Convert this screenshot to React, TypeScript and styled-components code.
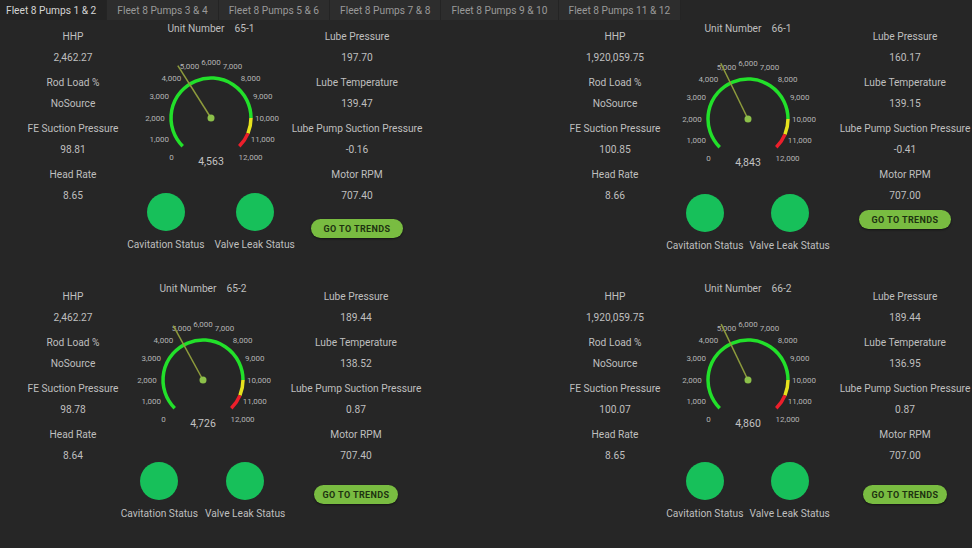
import React from "react";
import styled, { createGlobalStyle } from "styled-components";

const GlobalStyle = createGlobalStyle`
  html, body {
    margin: 0;
    padding: 0;
    background: #262626;
    overflow: hidden;
  }
  body {
    font-family: Roboto, "Liberation Sans", Arial, sans-serif;
    color: #bdbdbd;
  }
`;

const Page = styled.div`
  width: 972px;
  height: 548px;
  background: #262626;
`;

const TabBar = styled.div`
  display: flex;
  height: 20px;
  background: #262626;
`;

const Tab = styled.div<{ $active?: boolean }>`
  display: flex;
  align-items: center;
  padding: 0 10px;
  font-size: 10.2px;
  color: ${(p) => (p.$active ? "#d4d4d4" : "#999999")};
  background: ${(p) => (p.$active ? "#232323" : "#2d2d2d")};
  border-right: 1px solid #242424;
  white-space: nowrap;

  &:first-child {
    padding-left: 6px;
  }
`;

const Grid = styled.div`
  display: grid;
  grid-template-columns: 486px 486px;
  grid-template-rows: 260px 260px;
`;

const Panel = styled.div<{ $cols: string; $pad: number }>`
  display: grid;
  grid-template-columns: ${(p) => p.$cols};
  padding-left: ${(p) => p.$pad}px;
  align-items: start;
`;

const Column = styled.div`
  display: flex;
  flex-direction: column;
  align-items: center;
  padding-top: 6px;
`;

const Center = styled.div`
  display: flex;
  flex-direction: column;
  align-items: center;
`;

const Field = styled.div`
  display: flex;
  flex-direction: column;
  align-items: center;
  margin-bottom: 4px;
  white-space: nowrap;
`;

const Label = styled.div`
  font-size: 10.2px;
  line-height: 21px;
  color: #bfbfbf;
`;

const Value = styled.div`
  font-size: 10.2px;
  line-height: 21px;
  color: #bfbfbf;
`;

const UnitRow = styled.div`
  display: flex;
  gap: 10px;
  font-size: 10.2px;
  line-height: 18px;
  color: #bfbfbf;
  white-space: nowrap;
`;

const GaugeSvg = styled.svg<{ $top: number }>`
  display: block;
  margin-top: ${(p) => p.$top}px;
`;

const StatusRow = styled.div<{ $top: number; $gap: number }>`
  display: flex;
  gap: ${(p) => p.$gap}px;
  margin-top: ${(p) => p.$top}px;
`;

const StatusItem = styled.div`
  display: flex;
  flex-direction: column;
  align-items: center;
`;

const Lamp = styled.div`
  width: 38px;
  height: 38px;
  border-radius: 50%;
  background: #17c05a;
`;

const StatusLabel = styled.div`
  margin-top: 7px;
  font-size: 10.2px;
  line-height: 14px;
  color: #bfbfbf;
  white-space: nowrap;
`;

const TrendsButton = styled.button<{ $top: number; $width: number }>`
  margin-top: ${(p) => p.$top}px;
  width: ${(p) => p.$width}px;
  height: 19px;
  border: none;
  border-radius: 10px;
  background: #79bc41;
  color: #1d3210;
  font-family: Roboto, "Liberation Sans", Arial, sans-serif;
  font-weight: 700;
  font-size: 9px;
  letter-spacing: 0.4px;
  padding: 0;
  box-shadow: 0 1px 2px rgba(0, 0, 0, 0.5);
  cursor: pointer;
`;

const MAX = 12000;
const R = 40;
const CX = 75;
const CY = 66;

const angle = (v: number) => ((-135 + (v / MAX) * 270) * Math.PI) / 180;
const pt = (v: number, r: number) => {
  const a = angle(v);
  return [CX + r * Math.sin(a), CY - r * Math.cos(a)];
};

const arc = (from: number, to: number) => {
  const [x1, y1] = pt(from, R);
  const [x2, y2] = pt(to, R);
  const large = ((to - from) / MAX) * 270 > 180 ? 1 : 0;
  return `M ${x1} ${y1} A ${R} ${R} 0 ${large} 1 ${x2} ${y2}`;
};

const Gauge = ({ value, top }: { value: number; top: number }) => {
  const [nx, ny] = pt(value, 62);
  const ticks = Array.from({ length: 13 }, (_, i) => i * 1000);
  return (
    <GaugeSvg width="150" height="122" viewBox="0 0 150 122" $top={top}>
      <path d={arc(0, 10000)} stroke="#22e02a" strokeWidth="3.5" fill="none" />
      <path d={arc(10000, 11000)} stroke="#e6e21e" strokeWidth="3.5" fill="none" />
      <path d={arc(11000, 12000)} stroke="#ec1f2b" strokeWidth="3.5" fill="none" />
      {ticks.map((t) => {
        const [x, y] = pt(t, 56);
        return (
          <text
            key={t}
            x={x}
            y={y}
            fontSize="8"
            fill="#b4b4b4"
            textAnchor="middle"
            dominantBaseline="central"
            fontFamily="Roboto, 'Liberation Sans', sans-serif"
          >
            {t.toLocaleString("en-US")}
          </text>
        );
      })}
      <line x1={CX} y1={CY} x2={nx} y2={ny} stroke="#8d9b3c" strokeWidth="1.5" />
      <circle cx={CX} cy={CY} r="3.5" fill="#8cc04a" />
      <text
        x={CX}
        y={CY + 43}
        fontSize="10.5"
        fill="#c2c2c2"
        textAnchor="middle"
        dominantBaseline="central"
        fontFamily="Roboto, 'Liberation Sans', sans-serif"
      >
        {value.toLocaleString("en-US")}
      </text>
    </GaugeSvg>
  );
};

type Pump = {
  unit: string;
  hhp: string;
  fe: string;
  head: string;
  rpmGauge: number;
  lp: string;
  lt: string;
  lps: string;
  rpm: string;
  cols: string;
  pad: number;
  gaugeTop: number;
  statusTop: number;
  statusGap: number;
  btnTop: number;
  btnWidth: number;
};

const pumps: Pump[] = [
  {
    unit: "65-1", hhp: "2,462.27", fe: "98.81", head: "8.65", rpmGauge: 4563,
    lp: "197.70", lt: "139.47", lps: "-0.16", rpm: "707.40",
    cols: "146px 130px 162px", pad: 0, gaugeTop: 14, statusTop: 19, statusGap: 10,
    btnTop: 9, btnWidth: 92,
  },
  {
    unit: "66-1", hhp: "1,920,059.75", fe: "100.85", head: "8.66", rpmGauge: 4843,
    lp: "160.17", lt: "139.15", lps: "-0.41", rpm: "707.00",
    cols: "120px 146px 168px", pad: 69, gaugeTop: 15, statusTop: 19, statusGap: 6,
    btnTop: 0, btnWidth: 92,
  },
  {
    unit: "65-2", hhp: "2,462.27", fe: "98.78", head: "8.64", rpmGauge: 4726,
    lp: "189.44", lt: "138.52", lps: "0.87", rpm: "707.40",
    cols: "146px 114px 192px", pad: 0, gaugeTop: 16, statusTop: 26, statusGap: 7,
    btnTop: 15, btnWidth: 84,
  },
  {
    unit: "66-2", hhp: "1,920,059.75", fe: "100.07", head: "8.65", rpmGauge: 4860,
    lp: "189.44", lt: "136.95", lps: "0.87", rpm: "707.00",
    cols: "120px 146px 168px", pad: 69, gaugeTop: 16, statusTop: 26, statusGap: 6,
    btnTop: 15, btnWidth: 84,
  },
];

const tabs = [
  "Fleet 8 Pumps 1 & 2",
  "Fleet 8 Pumps 3 & 4",
  "Fleet 8 Pumps 5 & 6",
  "Fleet 8 Pumps 7 & 8",
  "Fleet 8 Pumps 9 & 10",
  "Fleet 8 Pumps 11 & 12",
];

const Reading = ({ label, value }: { label: string; value: string }) => (
  <Field>
    <Label>{label}</Label>
    <Value>{value}</Value>
  </Field>
);

const PumpPanel = ({ p }: { p: Pump }) => (
  <Panel $cols={p.cols} $pad={p.pad}>
    <Column>
      <Reading label="HHP" value={p.hhp} />
      <Reading label="Rod Load %" value="NoSource" />
      <Reading label="FE Suction Pressure" value={p.fe} />
      <Reading label="Head Rate" value={p.head} />
    </Column>
    <Center>
      <UnitRow>
        <span>Unit Number</span>
        <span>{p.unit}</span>
      </UnitRow>
      <Gauge value={p.rpmGauge} top={p.gaugeTop} />
      <StatusRow $top={p.statusTop} $gap={p.statusGap}>
        <StatusItem>
          <Lamp />
          <StatusLabel>Cavitation Status</StatusLabel>
        </StatusItem>
        <StatusItem>
          <Lamp />
          <StatusLabel>Valve Leak Status</StatusLabel>
        </StatusItem>
      </StatusRow>
    </Center>
    <Column>
      <Reading label="Lube Pressure" value={p.lp} />
      <Reading label="Lube Temperature" value={p.lt} />
      <Reading label="Lube Pump Suction Pressure" value={p.lps} />
      <Reading label="Motor RPM" value={p.rpm} />
      <TrendsButton $top={p.btnTop} $width={p.btnWidth}>
        GO TO TRENDS
      </TrendsButton>
    </Column>
  </Panel>
);

export default function App() {
  return (
    <Page>
      <GlobalStyle />
      <TabBar>
        {tabs.map((t, i) => (
          <Tab key={t} $active={i === 0}>
            {t}
          </Tab>
        ))}
      </TabBar>
      <Grid>
        {pumps.map((p) => (
          <PumpPanel key={p.unit} p={p} />
        ))}
      </Grid>
    </Page>
  );
}
